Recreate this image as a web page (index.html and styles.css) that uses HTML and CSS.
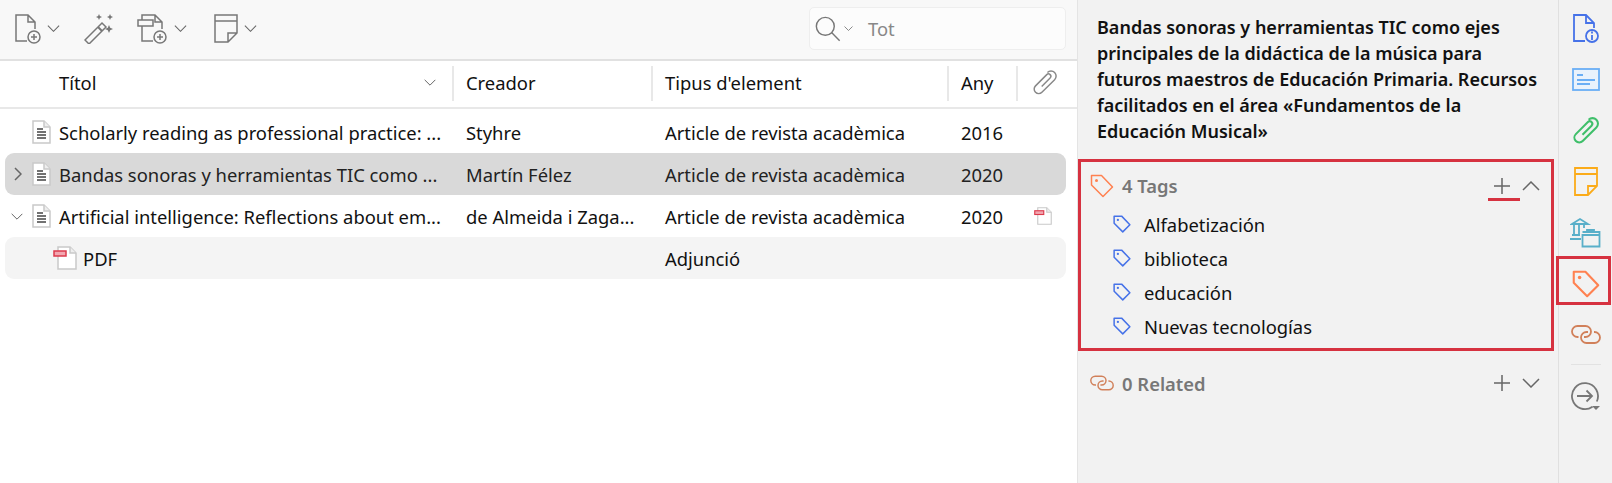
FILE: index.html
```html
<!DOCTYPE html>
<html lang="ca">
<head>
  <meta charset="UTF-8" />
  <title>Zotero</title>
  <link rel="stylesheet" href="styles.css">
</head>
<body>
  <svg class="defs" width="0" height="0">
    <symbol id="doc" viewBox="0 0 19 24">
      <path d="M1 1h11l6 6v16H1z" fill="#fff" stroke="#c9c9c9" stroke-width="1.5"/>
      <path d="M12 1v6h6" fill="#eee" stroke="#c9c9c9" stroke-width="1.5"/>
      <path d="M5 9h6M5 12h9M5 15h9M5 18h9" stroke="#444" stroke-width="1.3"/>
    </symbol>
    <symbol id="pdf" viewBox="0 0 24 24">
      <path d="M5 1h12l6 6v16H5z" fill="#fff" stroke="#c9c9c9" stroke-width="1.5"/>
      <path d="M17 1v6h6" fill="#eee" stroke="#c9c9c9" stroke-width="1.5"/>
      <rect x="1" y="5" width="12" height="5" fill="#f2a6b0" stroke="#db3a4c" stroke-width="1.5"/>
    </symbol>
    <symbol id="tag" viewBox="0 0 24 24">
      <path d="M1.5 1.5h10l11 11.500-9.500 9.500-11.500-11.500z" fill="none" stroke="currentColor" stroke-linejoin="round"/>
      <circle cx="6.500" cy="6.500" r="1.500" fill="currentColor" stroke="none"/>
    </symbol>
    <symbol id="plus" viewBox="0 0 18 18">
      <path d="M9 1v16M1 9h16" stroke="#666" stroke-width="1.500"/>
    </symbol>
    <symbol id="chev" viewBox="0 0 18 10">
      <path d="M1 1l8 8 8-8" fill="none" stroke="#666" stroke-width="1.500"/>
    </symbol>
    <symbol id="chev-up" viewBox="0 0 18 10">
      <path d="M1 9l8-8 8 8" fill="none" stroke="#666" stroke-width="1.500"/>
    </symbol>
    <symbol id="link" viewBox="0 0 30 19">
      <path d="M13 12h1.500a5.500 5.500 0 0 0 0-11h-8a5.500 5.500 0 0 0 0 11h1" fill="none" stroke="currentColor" stroke-width="1.800"/>
      <path d="M23 7h.5a5.500 5.500 0 0 1 0 11h-8a5.500 5.500 0 0 1 0-11H17" fill="none" stroke="currentColor" stroke-width="1.800"/>
    </symbol>
    <symbol id="clip" viewBox="0 0 24 24">
      <path d="M9.500 15.500L17 8a2 2 0 0 0-3-3L4 15a4 4 0 0 0 5.700 5.700L21 9.500a4.500 4.500 0 0 0-6.400-6.400" fill="none" stroke="currentColor"/>
    </symbol>
  </svg>

  <div class="main">
    <div class="toolbar">
      <button class="tool">
        <svg width="26" height="30" viewBox="0 0 26 30" fill="none" stroke="#777" stroke-width="1.500">
          <path d="M12 27H1V1h12l7 7v7M13 1v7h7"/>
          <circle cx="19" cy="23" r="6"/>
          <path d="M19 20v6M16 23h6"/>
        </svg>
        <svg class="tool-chev"><use href="#chev"/></svg>
      </button>
      <button class="tool tool-wand">
        <svg width="30" height="30" viewBox="0 0 30 30" fill="none" stroke="#777" stroke-width="1.500">
          <path d="M1 26L18 9l4 4L5 30z"/>
          <path d="M14 13l4 4" stroke-width="2"/>
          <path d="M25 11l1.200 2.800L29 15l-2.800 1.200L25 19l-1.200-2.800L21 15l2.800-1.200z" fill="#777" stroke="none"/>
          <path d="M15 0l.9 2.100L18 3l-2.100.9L15 6l-.9-2.100L12 3l2.100-.9zM26 0l.9 2.100L29 3l-2.100.9L26 6l-.9-2.100L23 3l2.100-.9z" fill="#777" stroke="none"/>
        </svg>
      </button>
      <button class="tool tool-attach">
        <svg width="31" height="30" viewBox="0 0 31 30" fill="none" stroke="#777" stroke-width="1.500">
          <path d="M16 27H5V12M5 6V1h13l7 7v7M18 1v7h7"/>
          <rect x="1" y="6" width="15" height="6"/>
          <circle cx="23" cy="23" r="6"/>
          <path d="M23 20v6M20 23h6"/>
        </svg>
        <svg class="tool-chev"><use href="#chev"/></svg>
      </button>
      <button class="tool tool-note">
        <svg width="24" height="29" viewBox="0 0 24 29" fill="none" stroke="#777" stroke-width="1.500">
          <path d="M1 1h22v18l-9 9H1zM1 7h22M23 19h-9v9"/>
        </svg>
        <svg class="tool-chev"><use href="#chev"/></svg>
      </button>
      <div class="search">
        <svg width="26" height="26" viewBox="0 0 29 29" fill="none" stroke="#777" stroke-width="1.600">
          <circle cx="11.500" cy="11.500" r="10"/>
          <path d="M18.500 18.500l9 9"/>
        </svg>
        <svg class="search-chev"><use href="#chev"/></svg>
        <span class="search-text">Tot</span>
      </div>
    </div>

    <div class="head row-grid">
      <div class="col col-title">Títol<svg class="sort"><use href="#chev"/></svg></div>
      <div class="col">Creador</div>
      <div class="col">Tipus d'element</div>
      <div class="col">Any</div>
      <div class="col col-clip"><svg class="head-clip"><use href="#clip"/></svg></div>
    </div>

    <div class="items">
      <div class="item row-grid">
        <div class="cell cell-title"><svg class="ico-doc"><use href="#doc"/></svg><span>Scholarly reading as professional practice: ...</span></div>
        <div class="cell">Styhre</div>
        <div class="cell">Article de revista acadèmica</div>
        <div class="cell">2016</div>
        <div class="cell"></div>
      </div>
      <div class="item row-grid selected">
        <div class="cell cell-title">
          <svg class="twisty-closed" viewBox="0 0 8 14"><path d="M1 1l6 6-6 6" fill="none" stroke="#666" stroke-width="1.500"/></svg>
          <svg class="ico-doc"><use href="#doc"/></svg><span>Bandas sonoras y herramientas TIC como ...</span>
        </div>
        <div class="cell">Martín Félez</div>
        <div class="cell">Article de revista acadèmica</div>
        <div class="cell">2020</div>
        <div class="cell"></div>
      </div>
      <div class="item row-grid">
        <div class="cell cell-title">
          <svg class="twisty-open"><use href="#chev"/></svg>
          <svg class="ico-doc"><use href="#doc"/></svg><span>Artificial intelligence: Reflections about em...</span>
        </div>
        <div class="cell">de Almeida i Zaga...</div>
        <div class="cell">Article de revista acadèmica</div>
        <div class="cell">2020</div>
        <div class="cell cell-att"><svg class="ico-att"><use href="#pdf"/></svg></div>
      </div>
      <div class="item row-grid child">
        <div class="cell cell-child"><svg class="ico-pdf"><use href="#pdf"/></svg><span>PDF</span></div>
        <div class="cell"></div>
        <div class="cell">Adjunció</div>
        <div class="cell"></div>
        <div class="cell"></div>
      </div>
    </div>
  </div>

  <div class="details">
    <div class="item-title">Bandas sonoras y herramientas TIC como ejes principales de la didáctica de la música para futuros maestros de Educación Primaria. Recursos facilitados en el área «Fundamentos de la Educación Musical»</div>

    <div class="section section-tags">
      <div class="section-head">
        <svg class="section-ico tag-orange"><use href="#tag"/></svg>
        <span class="section-label">4 Tags</span>
        <svg class="section-plus"><use href="#plus"/></svg>
        <svg class="section-chev"><use href="#chev-up"/></svg>
        <div class="plus-mark"></div>
      </div>
      <div class="tag-row"><svg class="tag-ico"><use href="#tag"/></svg>Alfabetización</div>
      <div class="tag-row"><svg class="tag-ico"><use href="#tag"/></svg>biblioteca</div>
      <div class="tag-row"><svg class="tag-ico"><use href="#tag"/></svg>educación</div>
      <div class="tag-row"><svg class="tag-ico"><use href="#tag"/></svg>Nuevas tecnologías</div>
    </div>

    <div class="section-head section-related">
      <svg class="section-ico link-brown"><use href="#link"/></svg>
      <span class="section-label">0 Related</span>
      <svg class="section-plus"><use href="#plus"/></svg>
      <svg class="section-chev"><use href="#chev"/></svg>
    </div>
  </div>

  <div class="sidebar">
    <button class="side-btn">
      <svg width="26" height="29" viewBox="0 0 26 29" fill="none" stroke="#4672e8" stroke-width="1.800">
        <path d="M12 27H1V1h12l8 8v5M13 1v8h8"/>
        <circle cx="19" cy="22" r="6" fill="#f2f2f2"/>
        <path d="M19 21v5M19 17.500v2"/>
      </svg>
    </button>
    <button class="side-btn">
      <svg width="28" height="23" viewBox="0 0 28 23" fill="none" stroke="#6aaef5" stroke-width="1.800">
        <rect x="1" y="1" width="26" height="21" fill="#e9f2fc"/>
        <path d="M5 7h6M5 12h18M5 16h13"/>
      </svg>
    </button>
    <button class="side-btn">
      <svg class="side-clip"><use href="#clip"/></svg>
    </button>
    <button class="side-btn">
      <svg width="24" height="29" viewBox="0 0 24 29" fill="none" stroke="#fbab19" stroke-width="1.800">
        <path d="M1 1h22v18l-9 9H1zM1 7h22M23 19h-9v9"/>
      </svg>
    </button>
    <button class="side-btn">
      <svg width="31" height="31" viewBox="0 0 31 31" fill="none" stroke="#59afc9" stroke-width="1.800">
        <path d="M2 7l8-5 8 5zM4 7v11M9 7v11M14 7v4M2 18h8M0 22h11"/>
        <path d="M12.500 18h17v11.500h-17zM12.500 15h17v3M17 15v-2h7v2"/>
      </svg>
    </button>
    <button class="side-btn side-active">
      <svg class="side-tag"><use href="#tag"/></svg>
      <div class="active-mark"></div>
    </button>
    <button class="side-btn">
      <svg class="side-link"><use href="#link"/></svg>
    </button>
    <div class="side-sep"></div>
    <button class="side-btn">
      <svg width="30" height="29" viewBox="0 0 30 29" fill="none" stroke="#777" stroke-width="1.800">
        <path d="M21.500 24.700A13 13 0 1 1 25.800 19.500"/>
        <path d="M6 14h15M15.500 8.500l5.500 5.500-5.500 5.500"/>
        <path d="M21 24h8l-4 4z" fill="#777" stroke="none"/>
      </svg>
    </button>
  </div>
</body>
</html>
```

FILE: styles.css
```css
* { box-sizing: border-box; }
html, body { margin: 0; padding: 0; }
body {
  width: 1612px;
  height: 483px;
  display: flex;
  overflow: hidden;
  background: #fff;
  color: #111;
  font-family: "Noto Sans", sans-serif;
  font-size: 18.400px;
}
svg { display: block; flex: none; }
.defs { position: absolute; }
button { background: none; border: none; padding: 0; display: flex; align-items: center; }

.main { width: 1077px; flex: none; }
.toolbar {
  height: 61px;
  background: #f8f8f8;
  border-bottom: 2px solid #e1e1e1;
  display: flex;
  align-items: center;
  padding: 0 11px 2px 15px;
}
.tool { height: 30px; }
.tool-chev { width: 13px; height: 7px; margin-left: 6px; }
.tool-wand { margin-left: 24px; }
.tool-attach { margin-left: 23px; }
.tool-note { margin-left: 27px; }
.search {
  margin-left: auto;
  width: 257px;
  height: 43px;
  background: #fcfcfc;
  border: 1px solid #eee;
  border-radius: 5px;
  display: flex;
  align-items: center;
  padding-left: 5px;
}
.search-chev { width: 9px; height: 5px; margin-left: 3px; }
.search-text { margin-left: 15px; color: #888; }

.row-grid {
  display: grid;
  grid-template-columns: 449px 199px 296px 69px 49px;
  margin: 0 11px 0 5px;
}
.head {
  height: 48px;
  padding: 5px 11px 6px 5px;
  margin: 0;
  border-bottom: 2px solid #e8e8e8;
}
.col {
  display: flex;
  align-items: center;
  padding-left: 12px;
  padding-bottom: 2px;
  border-right: 2px solid #e8e8e8;
  white-space: nowrap;
}
.col-title { padding-left: 54px; justify-content: space-between; padding-right: 16px; }
.col-clip { border-right: none; padding-left: 13px; }
.sort { width: 12px; height: 7px; padding: 0; }
.head-clip { width: 27px; height: 27px; color: #888; stroke-width: 1.300; }

.items { padding-top: 2px; }
.item { height: 42px; border-radius: 9px; }
.selected { background: #d9d9d9; color: #222; }
.child { background: #f4f4f4; }
.cell {
  display: flex;
  align-items: center;
  padding-left: 12px;
  white-space: nowrap;
  overflow: hidden;
}
.cell-title { padding-left: 27px; position: relative; }
.ico-doc { width: 19px; height: 24px; margin-right: 8px; }
.twisty-closed { position: absolute; left: 9px; top: 14px; width: 8px; height: 14px; }
.twisty-open { position: absolute; left: 6px; top: 18px; width: 12px; height: 7px; }
.cell-child { padding-left: 48px; }
.ico-pdf { width: 24px; height: 24px; margin-right: 6px; }
.cell-att { padding-left: 16px; }
.ico-att { width: 18px; height: 18px; }

.details {
  width: 482px;
  flex: none;
  background: #f2f2f2;
  border-left: 1px solid #e4e4e4;
  border-right: 1px solid #e0e0e0;
}
.item-title {
  height: 159px;
  padding: 14px 17px 0 19px;
  font-weight: 600;
  font-size: 18px;
  line-height: 26px;
}
.section-tags {
  width: 476px;
  height: 192px;
  border: 3px solid #d63240;
}
.section-head {
  height: 45px;
  display: flex;
  align-items: center;
  position: relative;
}
.section-tags .section-head { padding: 2px 11px 0 9px; }
.section-related { height: 50px; margin-top: 7px; width: 476px; padding: 0 14px 0 12px; }
.section-ico { width: 24px; height: 24px; margin-right: 8px; }
.tag-orange { color: #ff8150; stroke-width: 1.500; }
.link-brown { color: #d1805a; width: 24px; height: 16px; }
.section-label { font-weight: 600; color: #777; }
.section-plus { width: 18px; height: 18px; margin-left: auto; }
.section-chev { width: 18px; height: 10px; margin-left: 11px; }
.plus-mark {
  position: absolute;
  left: 407px;
  top: 36px;
  width: 32px;
  height: 3px;
  background: #d63240;
}
.tag-row {
  height: 34px;
  display: flex;
  align-items: center;
  padding-left: 32px;
}
.tag-ico { width: 18px; height: 18px; margin-right: 13px; color: #4672e8; stroke-width: 2; }

.sidebar {
  flex: 1;
  background: #f2f2f2;
  display: flex;
  flex-direction: column;
  align-items: center;
  padding-top: 3px;
}
.side-btn { width: 53px; height: 51px; flex: none; justify-content: center; }
.side-clip { width: 29px; height: 29px; color: #3fbf6a; stroke-width: 1.700; }
.side-active { position: relative; }
.active-mark {
  position: absolute;
  left: -3px;
  top: -2px;
  width: 55px;
  height: 49px;
  border: 3px solid #d63240;
}
.side-tag { width: 28px; height: 28px; color: #ff8150; stroke-width: 1.800; }
.side-link { width: 30px; height: 19px; color: #d1805a; }
.side-sep { width: 30px; height: 1px; background: #e2e2e2; margin: 4px 0 6px; flex: none; }
```
